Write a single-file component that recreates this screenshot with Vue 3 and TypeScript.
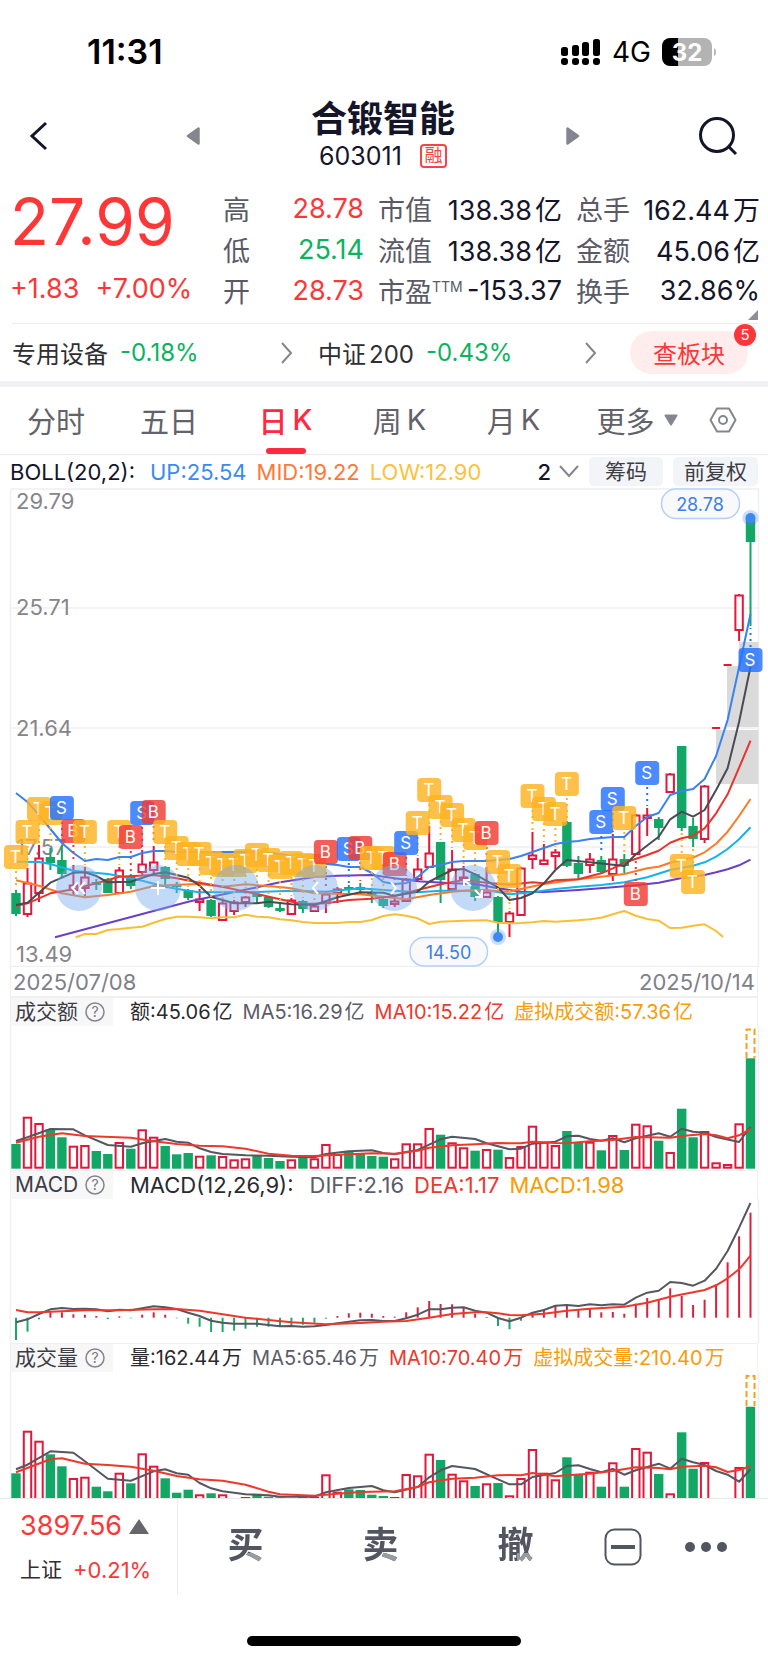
<script setup lang="ts">
import { ref } from 'vue'

type Pair = [number, number]
type Candle = [up: 0 | 1, top: number, bottom: number, high: number, low: number]
type Legend = { text: string; unit?: string; tone: string }

const FIRST = 16
const STEP = 11.477
const HALF = 4.7
const xAt = (i: number) => +(FIRST + STEP * i).toFixed(1)
const yAt = (base: number, v: number) => +(base + v / 3).toFixed(1)
const line = (base: number, pairs: Pair[]) =>
  pairs.map(([i, v]) => `${xAt(i)},${yAt(base, v)}`).join(' ')
const dense = (base: number, values: number[]) =>
  line(base, values.map((v, i): Pair => [i, v]))

const tabs = ['分时', '五日', '日K', '周K', '月K']
const activeTab = ref('日K')

const quotes = [
  { k: '高', v: '28.78', tone: 'up', k2: '市值', v2: '138.38', u2: '亿', k3: '总手', v3: '162.44', u3: '万' },
  { k: '低', v: '25.14', tone: 'down', k2: '流值', v2: '138.38', u2: '亿', k3: '金额', v3: '45.06', u3: '亿' },
  { k: '开', v: '28.73', tone: 'up', k2: '市盈', sup: 'TTM', v2: '-153.37', k3: '换手', v3: '32.86%' }
]

const candles: Candle[] = [
  [0, 893, 914, 890, 916], [1, 883, 914, 868, 917], [1, 858, 893, 845, 902], [0, 857, 863, 848, 870],
  [0, 860, 874, 845, 877], [1, 885, 890, 865, 895], [1, 877, 888, 867, 896], [0, 882, 885, 879, 890],
  [0, 879, 893, 878, 893], [1, 870, 893, 867, 893], [0, 876, 886, 874, 889], [1, 864, 872, 850, 875],
  [1, 862, 870, 846, 873], [0, 867, 879, 866, 885], [0, 884, 887, 882, 893], [0, 890, 898, 889, 900],
  [1, 899, 902, 889, 911], [0, 900, 916, 899, 917], [1, 903, 920, 901, 921], [1, 902, 911, 900, 915],
  [1, 897, 902, 896, 907], [0, 894, 897, 892, 903], [0, 897, 907, 896, 908], [0, 908, 911, 903, 912],
  [1, 900, 914, 898, 915], [0, 901, 909, 900, 913], [1, 906, 911, 903, 912], [1, 894, 903, 892, 913],
  [1, 889, 893, 887, 903], [0, 887, 889, 885, 894], [0, 887, 890, 883, 895], [0, 892, 895, 890, 903],
  [0, 899, 906, 897, 908], [1, 901, 904, 898, 907], [1, 879, 901, 878, 902], [1, 869, 879, 858, 882],
  [1, 853, 867, 826, 868], [0, 842, 880, 842, 903], [1, 869, 889, 850, 890], [1, 877, 879, 866, 882],
  [0, 874, 897, 873, 901], [1, 892, 897, 867, 898], [0, 897, 922, 896, 937], [1, 913, 922, 911, 937],
  [1, 868, 915, 867, 915], [1, 855, 859, 832, 869], [1, 860, 864, 844, 865], [1, 852, 856, 849, 869],
  [0, 822, 866, 821, 867], [0, 863, 874, 856, 879], [1, 859, 865, 853, 873], [0, 860, 872, 856, 873],
  [1, 859, 874, 834, 881], [0, 859, 866, 854, 873], [1, 815, 854, 814, 855], [1, 815, 818, 808, 836],
  [0, 819, 828, 817, 840], [1, 774, 792, 773, 792], [0, 746, 828, 746, 831], [0, 826, 839, 818, 847],
  [1, 786, 839, 785, 843], [1, 728, 728, 728, 728], [1, 665, 665, 665, 665], [1, 595, 630, 594, 641],
  [0, 518, 542, 518, 626]
]

const UPPER = dense(0, [
  793, 802, 815, 829, 843, 853, 861, 859, 860, 857, 857, 853, 851, 851, 852, 852, 852, 852, 852, 852, 852,
  853, 853, 854, 856, 860, 863, 864, 865, 867, 867, 873, 882, 884, 883, 877, 867, 865, 862, 861, 861, 861,
  860, 859, 856, 852, 848, 844, 842, 841, 839, 838, 837, 837, 826, 817, 813, 795, 791, 789, 779, 756, 720,
  667, 614
].map(v => v * 3))

const overlays = [
  { color: '#f9bf34', pts: line(740, [[5.2, 592], [6, 582], [7, 582], [8, 570], [9, 567], [10, 563], [11, 560], [12, 548], [13, 537], [14, 530], [15, 530], [16, 532], [17, 535], [18, 532], [19, 532], [20, 524], [21, 530], [22, 532], [23, 538], [24, 541], [25, 546], [26, 549], [28, 549], [29, 546], [30, 546], [31, 540], [32, 528], [33, 523], [34, 527], [35, 535], [36, 552], [37, 545], [38, 544], [39, 542], [41, 541], [42, 548], [43, 550], [44, 549], [45, 547], [46, 543], [47, 545], [49, 541], [50, 538], [51, 533], [52, 523], [53, 513], [54, 527], [55, 537], [56, 542], [57, 564], [58, 563], [59, 557], [60, 553], [61, 573], [61.6, 591]]) },
  { color: '#6a3fc9', pts: line(740, [[3.4, 592], [15, 485], [16, 478], [21, 442], [23, 427], [26, 411], [28, 407], [31, 405], [33, 415], [35, 424], [38, 430], [40, 432], [42, 445], [44, 455], [46, 456], [49, 450], [52, 442], [54, 436], [56, 428], [58, 414], [60, 405], [61, 397], [62, 388], [63, 376], [64, 359]]) },
  { color: '#12b4ea', pts: line(740, [[0, 365], [2, 366], [3, 372], [5, 392], [8, 402], [9, 408], [11, 422], [13, 440], [15, 452], [16, 457], [21, 456], [24, 452], [27, 455], [30, 445], [32, 450], [35, 457], [37, 452], [40, 452], [41, 450], [43, 463], [45, 457], [47, 447], [49, 440], [51, 435], [53, 427], [55, 412], [57, 390], [59, 377], [60, 367], [61, 350], [62, 327], [63, 298], [64, 262]]) },
  { color: '#fb7a28', pts: line(740, [[0, 421], [2, 437], [4, 460], [6, 472], [8, 465], [10, 455], [12, 438], [14, 434], [16, 432], [18, 440], [20, 433], [22, 438], [24, 445], [26, 460], [30, 463], [32, 470], [34, 478], [36, 465], [38, 455], [40, 450], [43, 455], [44, 447], [46, 432], [49, 418], [51, 410], [53, 402], [55, 385], [56, 380], [57, 368], [59, 353], [60, 337], [61, 311], [62, 275], [63, 228], [64, 177]]) },
  { color: '#e9342c', pts: line(740, [[0, 498], [1, 490], [3, 460], [5, 448], [7, 430], [9, 410], [12, 405], [14, 415], [16, 428], [18, 440], [20, 455], [21, 462], [23, 478], [25, 492], [27, 490], [29, 480], [31, 476], [33, 468], [35, 450], [37, 433], [39, 420], [41, 428], [43, 434], [45, 427], [46, 430], [47, 421], [49, 418], [51, 400], [52, 385], [53, 368], [55, 345], [56, 332], [57, 308], [58, 295], [59, 287], [60, 265], [61, 220], [62, 163], [63, 83], [64, 2]]) },
  { color: '#4a4a55', pts: line(740, [[0, 495], [1, 488], [3, 428], [5, 398], [6, 397], [7, 408], [8, 427], [10, 425], [12, 402], [13, 397], [15, 413], [16, 437], [17, 470], [19, 490], [21, 490], [22, 485], [24, 493], [26, 495], [28, 472], [30, 457], [32, 458], [33, 467], [35, 455], [36, 425], [38, 390], [39, 387], [40, 403], [42, 442], [43, 480], [44, 474], [45, 460], [46, 430], [47, 390], [48, 360], [50, 367], [53, 378], [54, 343], [56, 290], [57, 238], [58, 215], [59, 230], [60, 210], [61, 150], [62, 85], [63, -55], [64, -220]]) },
  { color: '#3a82ee', pts: UPPER }
]

const signals: [number, 'T' | 'S' | 'B', number][] = [
  [0, 'T', 857], [1, 'T', 832], [2, 'T', 809], [3, 'T', 813], [4, 'S', 808], [5, 'B', 831], [6, 'T', 832],
  [9, 'T', 832], [10, 'B', 837], [11, 'S', 813], [12, 'B', 812], [13, 'T', 832], [14, 'T', 848],
  [15, 'T', 854], [16, 'T', 854], [17, 'T', 863], [18, 'T', 865], [19, 'T', 865], [20, 'T', 861],
  [21, 'T', 855], [22, 'T', 860], [23, 'T', 867], [24, 'T', 863], [25, 'T', 865], [26, 'T', 866],
  [27, 'B', 852], [29, 'S', 849], [30, 'B', 848], [31, 'T', 858], [32, 'T', 858], [33, 'B', 864],
  [34, 'S', 843], [35, 'T', 823], [36, 'T', 790], [37, 'T', 807], [38, 'T', 815], [39, 'T', 830],
  [40, 'T', 838], [41, 'B', 833], [42, 'T', 862], [43, 'T', 876], [45, 'T', 796], [46, 'T', 809],
  [47, 'T', 814], [48, 'T', 784], [51, 'S', 822], [52, 'S', 799], [53, 'T', 818], [54, 'B', 894],
  [55, 'S', 773], [58, 'T', 866], [59, 'T', 882], [64, 'S', 660]
]
const signalColor = { T: '#fdb321', S: '#2371ff', B: '#f13a33' }
const below = (i: number, y: number) => y > candles[i][4]
const stemEnd = (i: number, y: number) => (below(i, y) ? candles[i][4] + 2 : candles[i][3] - 2)

const axis = [
  { text: '29.79', y: 509 }, { text: '25.71', y: 615 }, { text: '21.64', y: 736 },
  { text: '17.57', y: 855 }, { text: '13.49', y: 962 }
]

const rising = new Set([
  1, 2, 5, 6, 9, 11, 12, 16, 18, 19, 20, 24, 26, 27, 28, 33, 34, 35, 36, 38, 39, 41, 43, 44, 45, 46, 47, 50,
  52, 54, 55, 57, 60, 61, 62, 63
])
const amountTop = [
  492, 410, 429, 449, 472, 497, 495, 513, 522, 486, 506, 448, 470, 498, 523, 519, 527, 526, 528, 538, 535,
  528, 534, 543, 538, 532, 535, 492, 522, 516, 520, 528, 530, 535, 490, 490, 444, 464, 487, 502, 512, 507,
  509, 531, 498, 437, 485, 495, 453, 488, 485, 511, 465, 510, 431, 436, 482, 516, 386, 472, 453, 547, 552,
  430, 235
]
const volumeTop = [
  400, 272, 302, 343, 379, 414, 410, 440, 454, 398, 430, 340, 377, 415, 458, 449, 463, 460, 463, 480, 471,
  461, 470, 472, 480, 470, 471, 403, 455, 448, 450, 464, 468, 471, 402, 406, 341, 360, 401, 421, 438, 430,
  429, 466, 414, 327, 398, 418, 352, 402, 395, 440, 367, 440, 324, 335, 402, 460, 277, 386, 366, 490, 490,
  381, 200
]
const amount5 = line(980, [[0, 483], [1, 472], [3, 447], [5, 448], [6, 466], [8, 495], [10, 500], [11, 490], [13, 477], [14, 485], [15, 488], [16, 505], [17, 516], [18, 522], [20, 526], [22, 527], [24, 530], [26, 532], [27, 522], [29, 514], [31, 511], [32, 519], [33, 523], [34, 516], [35, 510], [36, 494], [37, 478], [38, 470], [40, 477], [41, 490], [43, 508], [44, 506], [45, 491], [47, 485], [48, 469], [49, 467], [50, 477], [51, 482], [52, 475], [53, 487], [54, 475], [56, 460], [57, 470], [58, 446], [59, 455], [60, 458], [61, 471], [63, 486], [64, 440]])
const amount10 = line(980, [[0, 488], [2, 470], [4, 460], [6, 468], [10, 473], [12, 484], [14, 492], [16, 497], [18, 499], [20, 506], [22, 521], [24, 527], [26, 528], [28, 524], [31, 520], [33, 521], [35, 512], [36, 503], [38, 496], [40, 493], [42, 489], [44, 490], [45, 485], [47, 489], [48, 490], [50, 484], [52, 480], [54, 471], [57, 473], [58, 468], [60, 462], [61, 466], [62, 475], [63, 466], [64, 447]])
const volume5 = line(1340, [[0, 388], [1, 374], [3, 334], [5, 338], [6, 364], [8, 416], [10, 422], [12, 394], [13, 388], [14, 400], [15, 404], [16, 429], [17, 445], [18, 454], [20, 463], [22, 466], [23, 470], [26, 470], [27, 457], [29, 444], [31, 438], [32, 451], [33, 457], [35, 441], [36, 412], [37, 391], [38, 378], [40, 387], [42, 418], [43, 433], [44, 433], [45, 411], [47, 399], [48, 378], [49, 376], [50, 387], [51, 397], [52, 387], [53, 404], [54, 391], [56, 371], [57, 386], [58, 356], [59, 367], [60, 375], [61, 393], [62, 404], [63, 425], [64, 388]])
const volume10 = line(1340, [[0, 397], [3, 358], [4, 355], [6, 371], [8, 375], [10, 380], [12, 392], [14, 408], [16, 418], [18, 422], [20, 434], [22, 455], [23, 463], [26, 467], [28, 461], [30, 456], [33, 454], [35, 441], [36, 427], [38, 416], [40, 413], [42, 406], [43, 405], [44, 406], [45, 399], [47, 409], [48, 406], [50, 401], [52, 393], [54, 382], [56, 384], [57, 388], [58, 380], [60, 377], [61, 382], [62, 396], [63, 390], [64, 379]])

const barPanels = [
  {
    name: '成交额', box: '0 1026 768 144', top: 1026, bottom: 1170, base: 1168.7, origin: 980,
    bars: amountTop, ma5: amount5, ma10: amount10, dash: [1029.5, 1058],
    legend: [
      { text: '额:45.06', unit: '亿', tone: 'ink' }, { text: 'MA5:16.29', unit: '亿', tone: 'slate' },
      { text: 'MA10:15.22', unit: '亿', tone: 'red' }, { text: '虚拟成交额:57.36', unit: '亿', tone: 'amber' }
    ] as Legend[]
  },
  {
    name: '成交量', box: '0 1372 768 126', top: 1372, bottom: 1498, base: 1500, origin: 1340,
    bars: volumeTop, ma5: volume5, ma10: volume10, dash: [1376, 1406],
    legend: [
      { text: '量:162.44', unit: '万', tone: 'ink' }, { text: 'MA5:65.46', unit: '万', tone: 'slate' },
      { text: 'MA10:70.40', unit: '万', tone: 'red' }, { text: '虚拟成交量:210.40', unit: '万', tone: 'amber' }
    ] as Legend[]
  }
]
const macdLegend: Legend[] = [
  { text: 'DIFF:2.16', tone: 'slate' }, { text: 'DEA:1.17', tone: 'red' }, { text: 'MACD:1.98', tone: 'amber' }
]
const macdZero = 1317.7
const macdBars = [
  510, 485, 448, 427, 427, 433, 434, 438, 447, 439, 445, 434, 427, 434, 445, 461, 470, 486, 486, 482, 476,
  470, 470, 468, 465, 464, 458, 446, 438, 430, 428, 431, 438, 440, 427, 412, 393, 402, 403, 413, 431, 441,
  468, 478, 452, 428, 418, 407, 408, 420, 417, 427, 426, 431, 401, 384, 388, 355, 378, 405, 389, 343, 277,
  199, 128
].map(v => yAt(1170, v))
const diff = dense(1170, [
  457, 448, 432, 418, 414, 417, 416, 418, 424, 419, 421, 415, 409, 412, 417, 428, 438, 452, 458, 461, 461,
  461, 465, 469, 468, 470, 469, 465, 460, 455, 451, 450, 453, 453, 445, 434, 418, 418, 413, 412, 422, 428,
  444, 454, 443, 428, 420, 407, 405, 408, 403, 406, 403, 404, 383, 368, 362, 336, 339, 347, 332, 296, 243,
  173, 99
])
const dea = line(1170, [[0, 420], [1, 427], [2, 427], [4, 424], [6, 421], [9, 421], [12, 418], [14, 417], [16, 422], [18, 433], [20, 443], [22, 450], [24, 457], [27, 463], [30, 459], [32, 455], [34, 453], [36, 443], [38, 432], [40, 427], [41, 427], [42, 430], [43, 435], [44, 436], [46, 431], [48, 422], [50, 416], [53, 410], [55, 398], [57, 380], [59, 367], [60, 360], [61, 346], [62, 325], [63, 298], [64, 257]])
</script>

<template>
  <main class="app">
    <div class="status">
      <time>11:31</time>
      <div class="status-right">
        <svg width="40" height="28" viewBox="0 0 40 28" aria-hidden="true">
          <rect x="0" y="9" width="7" height="9" rx="2.5" /><rect x="11" y="7" width="7" height="11" rx="2.5" />
          <rect x="21" y="4" width="7" height="14" rx="2.5" /><rect x="32" y="1" width="7" height="17" rx="2.5" />
          <rect v-for="x in [0, 11, 21, 32]" :key="x" :x="x" y="20" width="7" height="7" rx="3" />
        </svg>
        <span class="net">4G</span>
        <svg width="55" height="28" viewBox="0 0 55 28" aria-label="32">
          <path d="M8 0H16V28H8A8 8 0 0 1 0 20V8A8 8 0 0 1 8 0Z" fill="#000" />
          <path d="M16 0H42A8 8 0 0 1 50 8V20A8 8 0 0 1 42 28H16Z" fill="#b3b3b3" />
          <path d="M52 10Q54 11 54 14T52 18Z" fill="#b3b3b3" />
          <text x="25" y="22.500" text-anchor="middle" fill="#fff" font-size="24" font-weight="700">32</text>
        </svg>
      </div>
    </div>

    <header class="head">
      <button class="icon" aria-label="返回">
        <svg width="20" height="32" viewBox="0 0 20 32"><path d="M18 3L4 16L18 29" fill="none" stroke="#15152a" stroke-width="3" /></svg>
      </button>
      <button class="icon" aria-label="上一只">
        <svg width="14" height="18" viewBox="0 0 14 18"><path d="M12.500 1.500V16.500L2 9Z" fill="#85858f" stroke="#85858f" stroke-width="2.500" stroke-linejoin="round" /></svg>
      </button>
      <div class="title">
        <h1>合锻智能</h1>
        <p>603011 <span class="rong">融</span></p>
      </div>
      <button class="icon" aria-label="下一只">
        <svg width="14" height="18" viewBox="0 0 14 18"><path d="M1.500 1.500V16.500L12 9Z" fill="#85858f" stroke="#85858f" stroke-width="2.500" stroke-linejoin="round" /></svg>
      </button>
      <button class="icon" aria-label="搜索">
        <svg width="40" height="40" viewBox="0 0 40 40" fill="none" stroke="#15152a" stroke-width="3"><circle cx="19" cy="19" r="16.500" /><path d="M30 30L38 38" /></svg>
      </button>
    </header>

    <section class="quote">
      <div class="price">
        <strong>27.99</strong>
        <p><span>+1.83</span><span>+7.00%</span></p>
      </div>
      <dl class="facts">
        <template v-for="q in quotes" :key="q.k">
          <dt>{{ q.k }}</dt><dd :class="q.tone">{{ q.v }}</dd>
          <dt>{{ q.k2 }}<sup v-if="q.sup">{{ q.sup }}</sup></dt>
          <dd>{{ q.v2 }}<span v-if="q.u2" class="unit">{{ q.u2 }}</span></dd>
          <dt>{{ q.k3 }}</dt>
          <dd>{{ q.v3 }}<span v-if="q.u3" class="unit">{{ q.u3 }}</span></dd>
        </template>
      </dl>
      <svg class="corner" width="10" height="10" viewBox="0 0 10 10"><path d="M10 0V10H0Z" fill="#8f8f98" /></svg>
    </section>

    <section class="sectors">
      <a href="#industry"><span>专用设备</span><em>-0.18%</em>
        <svg width="12" height="22" viewBox="0 0 12 22"><path d="M1 1L10 11L1 21" fill="none" stroke="#85858f" stroke-width="2" /></svg></a>
      <a href="#index"><span>中证<span class="unit">200</span></span><em>-0.43%</em>
        <svg width="12" height="22" viewBox="0 0 12 22"><path d="M1 1L10 11L1 21" fill="none" stroke="#85858f" stroke-width="2" /></svg></a>
      <button class="block-btn">查板块<span class="badge">5</span></button>
    </section>

    <nav class="tabs">
      <button v-for="t in tabs" :key="t" :class="{ active: t === activeTab }" @click="activeTab = t">
        {{ t[0] }}<span :class="{ latin: t[1] === 'K' }">{{ t[1] }}</span>
      </button>
      <button class="more">更多
        <svg width="14" height="12" viewBox="0 0 14 12"><path d="M1.500 1.500H12.500L7 10.500Z" fill="#85858f" stroke="#85858f" stroke-width="2" stroke-linejoin="round" /></svg>
      </button>
      <button aria-label="设置">
        <svg width="28" height="26" viewBox="0 0 28 26" fill="none" stroke="#85858f" stroke-width="2"><path d="M8 1.500H20L26.500 13L20 24.500H8L1.500 13Z" stroke-linejoin="round" /><circle cx="14" cy="13" r="4" /></svg>
      </button>
    </nav>

    <div class="boll">
      <span class="boll-name">BOLL(20,2):</span>
      <span class="b-up">UP:25.54</span><span class="b-mid">MID:19.22</span><span class="b-low">LOW:12.90</span>
      <button class="count">2
        <svg width="20" height="13" viewBox="0 0 20 13"><path d="M1 1L10 11L19 1" fill="none" stroke="#85858f" stroke-width="2" /></svg>
      </button>
      <button class="chip">筹码</button><button class="chip long">前复权</button>
    </div>

    <svg class="chart" viewBox="0 488 768 479" role="img" aria-label="日K线">
      <g stroke="#f0f0f2" stroke-width="1.500" fill="none">
        <path d="M10.500 489H758.500V967M10.500 489V967M10.500 608H758M10.500 728H758M10.500 847H758M10.500 966.500H758" />
      </g>
      <g fill="#dadadb">
        <rect x="739" y="642" width="19.500" height="25" /><rect x="727" y="666" width="31.500" height="61" />
        <rect x="716" y="730" width="42.500" height="54" />
      </g>
      <text v-for="a in axis" :key="a.text" x="16" :y="a.y" fill="#85858a" font-size="22">{{ a.text }}</text>
      <g v-for="(c, i) in candles" :key="i">
        <template v-if="c[0]">
          <path :d="`M${xAt(i)} ${c[3]}V${c[1]}M${xAt(i)} ${c[2]}V${c[4]}`" stroke="#e4163a" stroke-width="2" />
          <rect v-if="c[2] > c[1]" :x="xAt(i) - HALF + 1" :y="c[1] + 0.500" :width="HALF * 2 - 2" :height="c[2] - c[1] - 0.500" fill="#fff" stroke="#e4163a" stroke-width="2" />
          <path v-else :d="`M${xAt(i) - 4} ${c[1]}h8`" stroke="#e4163a" stroke-width="2" />
        </template>
        <template v-else>
          <path :d="`M${xAt(i)} ${c[3]}V${c[4]}`" stroke="#13a765" stroke-width="2" />
          <rect :x="xAt(i) - HALF" :y="c[1]" :width="HALF * 2" :height="c[2] - c[1]" fill="#13a765" />
        </template>
      </g>
      <polyline v-for="o in overlays" :key="o.color" :points="o.pts" fill="none" :stroke="o.color" stroke-width="2" stroke-linejoin="round" />
      <path v-for="([i, k, y]) in signals" :key="`d${i}`" :d="`M${xAt(i)} ${y + (below(i, y) ? -13 : 14)}V${stemEnd(i, y)}`" :stroke="signalColor[k]" stroke-width="2" stroke-dasharray="2 4" />
      <g v-for="([i, k, y]) in signals" :key="`s${i}`">
        <rect :x="xAt(i) - 12" :y="y - 12" width="24" height="24" rx="4" :fill="signalColor[k]" fill-opacity="0.820" />
        <text :x="xAt(i) - 0.500" :y="y + 6" text-anchor="middle" font-size="17" fill="#fff">{{ k }}</text>
      </g>
      <g fill="#78aaf0" fill-opacity="0.450">
        <circle v-for="x in [79, 158, 236, 315, 394, 473]" :key="x" :cx="x" cy="888" r="23" />
      </g>
      <g fill="none" stroke="#fff" stroke-width="2">
        <path d="M78 882L72.500 888L78 894M85 882L79.500 888L85 894" />
        <path d="M158 881V895M151 888H165" />
        <path d="M318 882L313 888L318 894M391 882L396 888L391 894" />
        <path d="M471 886L464 880M464 886V880H470M475 890L482 897M482 890V897H475" />
      </g>
      <g fill="#3f88ef">
        <circle cx="750.500" cy="518" r="8" fill-opacity="0.280" /><circle cx="750.500" cy="518" r="5" />
        <circle cx="498" cy="937" r="8" fill-opacity="0.280" /><circle cx="498" cy="937" r="5" />
      </g>
      <g fill="#f9f9fb" stroke="#b5d0f7" stroke-width="1.500">
        <rect x="661.500" y="489" width="78" height="29.500" rx="14.500" /><rect x="410" y="937.500" width="77.500" height="28.500" rx="14" />
      </g>
      <g fill="#3a80e8" font-size="18" text-anchor="middle">
        <text x="700" y="510.500">28.78</text><text x="448.500" y="959">14.50</text>
      </g>
    </svg>
    <div class="dates"><time>2025/07/08</time><time>2025/10/14</time></div>

    <template v-for="(p, n) in barPanels" :key="p.name">
      <section class="panel">
        <div class="panel-head">
          <button class="panel-name">{{ p.name }}
            <svg width="20" height="20" viewBox="0 0 20 20"><circle cx="10" cy="10" r="9" fill="none" stroke="#85858f" stroke-width="1.500" /><text x="10" y="15" text-anchor="middle" font-size="14" fill="#77777f">?</text></svg>
          </button>
          <span v-for="l in p.legend" :key="l.text" :class="l.tone">{{ l.text }}<span class="unit">{{ l.unit }}</span></span>
        </div>
        <svg class="chart" :viewBox="p.box" role="img" :aria-label="p.name">
          <path :d="`M10.500 ${p.top}V${p.bottom}M758.500 ${p.top}V${p.bottom}`" stroke="#f0f0f2" stroke-width="1.500" />
          <template v-for="(v, i) in p.bars" :key="i">
            <rect v-if="rising.has(i)" :x="xAt(i) - HALF + 1" :y="yAt(p.origin, v) + 1" :width="HALF * 2 - 2" :height="Math.max(p.base - yAt(p.origin, v) - 2, 0)" fill="#fff" stroke="#e4163a" stroke-width="2" />
            <rect v-else :x="xAt(i) - HALF" :y="yAt(p.origin, v)" :width="HALF * 2" :height="Math.max(p.base - yAt(p.origin, v), 0)" fill="#13a765" />
          </template>
          <path :d="`M746.500 ${p.dash[1]}V${p.dash[0]}H754.500V${p.dash[1]}`" fill="none" stroke="#f7a11b" stroke-width="2" stroke-dasharray="6 3" />
          <g fill="none" stroke-width="2" stroke-linejoin="round">
            <polyline :points="p.ma5" stroke="#555660" /><polyline :points="p.ma10" stroke="#ee382c" />
          </g>
        </svg>
      </section>
      <section v-if="n === 0" class="panel">
        <div class="panel-head macd">
          <button class="panel-name">MACD
            <svg width="20" height="20" viewBox="0 0 20 20"><circle cx="10" cy="10" r="9" fill="none" stroke="#85858f" stroke-width="1.500" /><text x="10" y="15" text-anchor="middle" font-size="14" fill="#77777f">?</text></svg>
          </button>
          <span class="ink wide">MACD(12,26,9):</span>
          <span v-for="l in macdLegend" :key="l.text" :class="l.tone">{{ l.text }}</span>
        </div>
        <svg class="chart" viewBox="0 1199 768 144" role="img" aria-label="MACD">
          <path d="M10.500 1199V1343M758.500 1199V1343" stroke="#f0f0f2" stroke-width="1.500" />
          <path v-for="(y, i) in macdBars" :key="i" :d="`M${xAt(i)} ${macdZero}V${y}`" :stroke="y < macdZero ? '#d9203c' : '#1aa868'" stroke-width="2" />
          <g fill="none" stroke-width="2" stroke-linejoin="round">
            <polyline :points="diff" stroke="#555660" /><polyline :points="dea" stroke="#ee382c" />
          </g>
        </svg>
      </section>
    </template>

    <footer class="bottom">
      <a class="index" href="#sse">
        <span class="index-value">3897.56 <svg width="20" height="15" viewBox="0 0 20 15"><path d="M10 0L20 15H0Z" fill="#66666a" /></svg></span>
        <span class="index-sub">上证 <em>+0.21%</em></span>
      </a>
      <nav class="actions">
        <button><span class="duo">买</span></button><button><span class="duo">卖</span></button><button><span class="duo">撤</span></button>
        <button class="tool" aria-label="收起">
          <svg width="38" height="38" viewBox="0 0 38 38" fill="none" stroke="#555562"><rect x="1.500" y="1.500" width="35" height="35" rx="9" stroke-width="2" /><path d="M7 19H31" stroke-width="4" /></svg>
        </button>
        <button class="tool" aria-label="更多操作">
          <svg width="42" height="12" viewBox="0 0 42 12" fill="#555562"><circle cx="5" cy="6" r="5" /><circle cx="21" cy="6" r="5" /><circle cx="37" cy="6" r="5" /></svg>
        </button>
      </nav>
    </footer>
    <div class="home"><span></span></div>
  </main>
</template>

<style>
body { background: #fff; }
</style>

<style scoped>
.app { font-family: Inter, "Noto Sans CJK SC", sans-serif; color: #15152a; background: #fff; overflow: hidden; }
.app * { box-sizing: border-box; }
button { border: 0; padding: 0; margin: 0; background: none; color: inherit; font: inherit; white-space: nowrap; }
a { color: inherit; text-decoration: none; }
h1, p, dl, dd { margin: 0; }
em { font-style: normal; }
svg { display: block; flex: none; }
.unit { margin-left: 3px; }

.status { height: 98px; padding: 5px 51px 0 87px; display: flex; align-items: center; justify-content: space-between; color: #000; }
.status time { font-size: 34px; font-weight: 600; }
.status-right { display: flex; align-items: center; gap: 11px; }
.net { font-size: 28px; }

.head { height: 83px; padding: 0 30px 8px 28px; display: grid; grid-template-columns: 1fr 14px minmax(160px, 366px) 14px 1fr; align-items: center; }
.head .icon:last-child { justify-self: end; }
.head .icon:first-child { justify-self: start; }
.title { text-align: center; padding-bottom: 2px; }
.title h1 { font-size: 36px; line-height: 42px; font-weight: 700; }
.title p { display: flex; align-items: center; justify-content: center; gap: 18px; font-size: 25px; line-height: 32px; }
.rong { width: 27px; height: 24px; border: 2px solid #fb4242; border-radius: 4px; color: #fb4242; font-size: 18px; line-height: 19px; }

.quote { position: relative; display: flex; justify-content: space-between; padding: 5px 8px 0 10px; height: 142px; }
.price { color: #fd3737; }
.price strong { display: block; font-weight: 400; font-size: 64px; line-height: 72px; }
.price p { display: flex; gap: 16px; font-size: 27px; line-height: 32px; margin-top: 15px; }
.facts { display: grid; grid-template-columns: 50px 91px 74px 124px 70px 128px; grid-auto-rows: 41px; align-items: center; padding-top: 2px; font-size: 27px; white-space: nowrap; }
.facts dt { color: #5a5a66; padding-left: 14px; }
.facts dt:nth-child(6n + 1) { padding-left: 0; }
.facts dd { text-align: right; }
.facts sup { font-size: 14px; line-height: 14px; }
.up { color: #fd3737; }
.down { color: #0bb35f; }
.corner { position: absolute; right: 10px; bottom: 3px; }

.sectors { display: grid; grid-template-columns: 281px 279px 1fr; column-gap: 25px; align-items: center; height: 58px; margin: 0 10px 0 12px; border-top: 1px solid #ececee; font-size: 24px; color: #2e2e33; }
.sectors a { display: flex; align-items: center; gap: 12px; }
.sectors a svg { margin-left: auto; }
.sectors em { color: #0bb35f; }
.block-btn { position: relative; justify-self: end; margin-right: 10px; width: 118px; height: 43px; border-radius: 22px; background: #ffeded; color: #fd3737; }
.badge { position: absolute; right: -8px; top: -7px; width: 22px; height: 22px; border-radius: 11px; background: #fd3737; color: #fff; font-size: 15px; line-height: 22px; }

.tabs { display: grid; grid-template-columns: 112fr 114fr 119fr 109fr 119fr 128fr 44fr; height: 74px; padding-right: 23px; border-top: 6px solid #f1f1f6; border-bottom: 1px solid #ececee; font-size: 29px; color: #62626a; }
.tabs button { position: relative; display: flex; align-items: center; justify-content: center; padding-bottom: 2px; }
.tabs .latin { margin-left: 5px; }
.tabs .active { color: #ff2943; font-weight: 500; }
.tabs .active::after { content: ""; position: absolute; bottom: 0; width: 40px; height: 6px; border-radius: 3px; background: #ff2943; }
.tabs .more { gap: 9px; }

.boll { display: flex; align-items: center; height: 33px; padding: 0 10px; gap: 10px; font-size: 22px; }
.boll-name { margin-right: 5px; }
.b-up { color: #3a8af3; }
.b-mid { color: #ff7837; }
.b-low { color: #fcc23c; }
.count { display: flex; align-items: center; gap: 8px; margin-left: auto; font-weight: 500; }
.chip { height: 29px; padding: 0 16px; border-radius: 5px; background: #f3f4f8; color: #3d3d45; font-size: 21px; line-height: 29px; }
.long { padding: 0 11px; }

.chart { width: 100%; height: auto; }
.dates { display: flex; justify-content: space-between; height: 30px; margin: 0 10px; padding: 0 2px; border: 1px solid #f0f0f2; border-top: 0; font-size: 22px; line-height: 30px; color: #80808a; }
.panel-head { display: flex; align-items: center; height: 29px; margin: 0 10px; gap: 10px; border: 1px solid #f0f0f2; border-bottom: 0; font-size: 20px; line-height: 26px; white-space: nowrap; }
.macd { font-size: 22px; }
.panel-name { display: flex; align-items: center; gap: 7px; width: 102px; height: 28px; padding-left: 4px; margin-right: 7px; background: #f7f7f8; font-size: 21px; color: #3d3d45; }
.panel-head .unit { margin-left: 2px; }
.ink { color: #2a2a2f; }
.wide { margin-right: 6px; }
.slate { color: #5c5c68; }
.red { color: #ee382c; }
.amber { color: #f99c05; }

.bottom { display: flex; height: 97px; border-top: 1px solid #e8e8ea; }
.index { width: 178px; flex: none; border-right: 1px solid #ececee; padding: 10px 0 0 20px; color: #2e2e33; }
.index-value { display: flex; align-items: center; gap: 7px; color: #fd3737; font-size: 27px; line-height: 34px; }
.index-sub { display: flex; align-items: center; gap: 11px; margin-top: 12px; font-size: 21px; line-height: 30px; }
.index-sub em { color: #fd3737; font-size: 22px; }
.actions { flex: 1; display: grid; grid-template-columns: repeat(3, 135fr) 80fr 85fr 20fr; align-items: center; padding-bottom: 1px; }
.actions button { font-size: 36px; font-weight: 700; }
.duo {
  display: inline-block; line-height: 44px; padding-bottom: 4px; color: transparent;
  background: linear-gradient(#9a9aa2, #9a9aa2) right bottom / 44% 36% no-repeat, #555562;
  background-clip: text;
}
.tool { display: flex; justify-content: center; }
.home { height: 68px; display: flex; justify-content: center; padding-top: 41px; }
.home span { width: 274px; height: 10px; border-radius: 5px; background: #000; }
</style>
